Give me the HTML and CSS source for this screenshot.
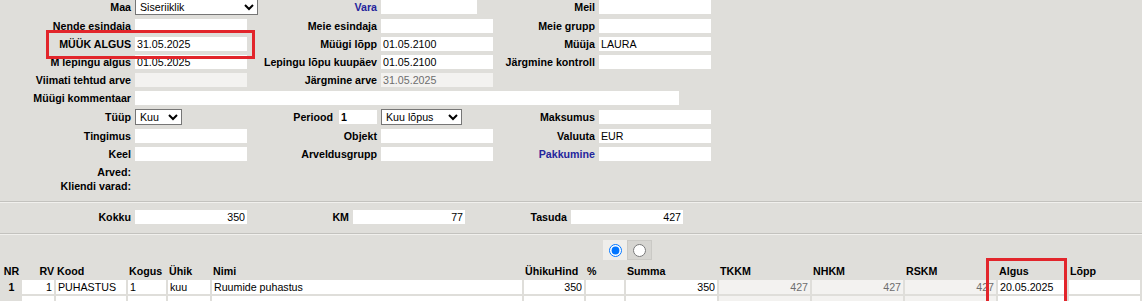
FILE: index.html
```html
<!DOCTYPE html>
<html lang="et">
<head>
    <meta charset="UTF-8">
    <title>Leping</title>
    <link rel="stylesheet" href="styles.css">
</head>
<body>

    <div class="form">
        <label class="lbl">Maa</label>
        <select class="sel sel-maa"><option>Siseriiklik</option></select>
        <a href="#" class="lbl link">Vara</a>
        <input class="fld fld-vara" type="text">
        <label class="lbl">Meil</label>
        <input class="fld" type="text">

        <label class="lbl">Nende esindaja</label>
        <input class="fld" type="text">
        <label class="lbl">Meie esindaja</label>
        <input class="fld" type="text">
        <label class="lbl">Meie grupp</label>
        <input class="fld" type="text">

        <label class="lbl">MÜÜK ALGUS</label>
        <input class="fld" type="text" value="31.05.2025">
        <label class="lbl">Müügi lõpp</label>
        <input class="fld" type="text" value="01.05.2100">
        <label class="lbl">Müüja</label>
        <input class="fld" type="text" value="LAURA">

        <label class="lbl">M lepingu algus</label>
        <input class="fld" type="text" value="01.05.2025">
        <label class="lbl">Lepingu lõpu kuupäev</label>
        <input class="fld" type="text" value="01.05.2100">
        <label class="lbl">Järgmine kontroll</label>
        <input class="fld" type="text">

        <label class="lbl">Viimati tehtud arve</label>
        <input class="fld" type="text" disabled>
        <label class="lbl">Järgmine arve</label>
        <input class="fld" type="text" value="31.05.2025" disabled>
        <span></span>
        <span></span>

        <label class="lbl">Müügi kommentaar</label>
        <input class="fld fld-wide" type="text">

        <label class="lbl">Tüüp</label>
        <select class="sel sel-kuu"><option>Kuu</option></select>
        <div class="lbl lbl-inline">
            <span>Periood</span>
            <input class="fld fld-short" type="text" value="1">
        </div>
        <select class="sel sel-lopus"><option>Kuu lõpus</option></select>
        <label class="lbl">Maksumus</label>
        <input class="fld" type="text">

        <label class="lbl">Tingimus</label>
        <input class="fld" type="text">
        <label class="lbl">Objekt</label>
        <input class="fld" type="text">
        <label class="lbl">Valuuta</label>
        <input class="fld" type="text" value="EUR">

        <label class="lbl">Keel</label>
        <input class="fld" type="text">
        <label class="lbl">Arveldusgrupp</label>
        <input class="fld" type="text">
        <a href="#" class="lbl link">Pakkumine</a>
        <input class="fld" type="text">

        <div class="mark mark-muuk"></div>
    </div>

    <div class="extra">
        <div class="lbl">Arved:</div>
        <div class="lbl">Kliendi varad:</div>
    </div>

    <div class="totals">
        <label class="lbl">Kokku</label>
        <input class="fld num" type="text" value="350">
        <label class="lbl">KM</label>
        <input class="fld num" type="text" value="77">
        <label class="lbl">Tasuda</label>
        <input class="fld num" type="text" value="427">
    </div>

    <div class="tabs">
        <label class="tab tab-on"><input type="radio" name="vaade" checked></label>
        <label class="tab"><input type="radio" name="vaade"></label>
    </div>

    <div class="rows">
        <div class="grid">
            <b class="th center">NR</b>
            <b class="th right">RV</b>
            <b class="th">Kood</b>
            <b class="th">Kogus</b>
            <b class="th">Ühik</b>
            <b class="th">Nimi</b>
            <b class="th">ÜhikuHind</b>
            <b class="th">%</b>
            <b class="th">Summa</b>
            <b class="th">TKKM</b>
            <b class="th">NHKM</b>
            <b class="th">RSKM</b>
            <b class="th">Algus</b>
            <b class="th">Lõpp</b>

            <span class="nr">1</span>
            <input class="cell num" type="text" value="1">
            <input class="cell" type="text" value="PUHASTUS">
            <input class="cell" type="text" value="1">
            <input class="cell" type="text" value="kuu">
            <input class="cell" type="text" value="Ruumide puhastus">
            <input class="cell num" type="text" value="350">
            <input class="cell" type="text">
            <input class="cell num" type="text" value="350">
            <input class="cell num" type="text" value="427" disabled>
            <input class="cell num" type="text" value="427" disabled>
            <input class="cell num" type="text" value="427" disabled>
            <input class="cell cell-date" type="text" value="20.05.2025">
            <input class="cell" type="text">

            <span class="nr"></span>
            <input class="cell num" type="text">
            <input class="cell" type="text">
            <input class="cell" type="text">
            <input class="cell" type="text">
            <input class="cell" type="text">
            <input class="cell num" type="text">
            <input class="cell" type="text">
            <input class="cell num" type="text">
            <input class="cell num" type="text" disabled>
            <input class="cell num" type="text" disabled>
            <input class="cell num" type="text" disabled>
            <input class="cell cell-date" type="text">
            <input class="cell" type="text">
        </div>
        <div class="mark mark-algus"></div>
    </div>

</body>
</html>
```

FILE: styles.css
```css
body {
    margin: 0;
    width: 1142px;
    height: 301px;
    overflow: hidden;
    background-color: #dfdeda;
    font-family: "Liberation Sans", Arial, sans-serif;
    font-size: 8pt;
    color: #000;
}

.form {
    position: relative;
    display: grid;
    grid-template-columns: 131px 112px 126px 112px 98px 112px;
    grid-template-rows: 16px repeat(5, 14px) 16px 14px 14px;
    column-gap: 4px;
    row-gap: 4px;
    margin-top: -1px;
}

.lbl {
    font-weight: bold;
    text-align: right;
    line-height: 14px;
    white-space: nowrap;
    align-self: center;
}

.link {
    color: #25259c;
    text-decoration: none;
}

.lbl-inline {
    display: flex;
    justify-content: flex-end;
    align-items: center;
    gap: 6px;
}

.fld {
    box-sizing: border-box;
    width: 112px;
    height: 14px;
    padding: 0 2px;
    border: none;
    outline: none;
    background-color: #fff;
    font: inherit;
    color: #000;
    align-self: center;
}

.fld:disabled,
.cell:disabled {
    background-color: #f3f2f0;
    color: #6d6d6d;
}

.fld-vara {
    width: 96px;
}

.fld-wide {
    grid-column: 2 / 7;
    width: 544px;
}

.fld-short {
    width: 38px;
}

.num {
    text-align: right;
}

.sel {
    box-sizing: border-box;
    height: 16px;
    padding: 0;
    border: 1px solid #767676;
    border-radius: 0;
    background-color: #fff;
    font: inherit;
    color: #000;
    align-self: center;
}

.sel-maa {
    width: 123px;
}

.sel-kuu {
    width: 47px;
}

.sel-lopus {
    width: 81px;
}

.mark {
    position: absolute;
    box-sizing: border-box;
    border: 3px solid #e2252b;
    pointer-events: none;
}

.mark-muuk {
    left: 46px;
    top: 31px;
    width: 209px;
    height: 29px;
}

.extra {
    margin-top: 4px;
    width: 131px;
}

.totals {
    display: grid;
    grid-template-columns: 131px 112px 98px 112px 98px 112px;
    column-gap: 4px;
    height: 14px;
    margin-top: 8px;
    padding: 8px 0 9px;
    border-top: 1px solid #c3c2be;
    border-bottom: 1px solid #c3c2be;
    box-shadow: inset 0 1px 0 #f1f0ed, 0 1px 0 #f1f0ed;
}

.tabs {
    display: flex;
    margin: 6px 0 0 603px;
    height: 20px;
}

.tab {
    box-sizing: border-box;
    display: flex;
    align-items: center;
    justify-content: center;
    width: 24px;
    height: 20px;
    background-color: #efeeeb;
}

.tab + .tab {
    width: 25px;
    background-color: #d6d5d1;
    border: 1px solid #cac9c5;
}

.tab input {
    margin: 0;
    width: 13px;
    height: 13px;
}

.rows {
    position: relative;
    margin-top: 4px;
}

.grid {
    display: grid;
    grid-template-columns: 17px 32px 70px 38px 42px 310px 60px 38px 91px 91px 91px 91px 69px 71px;
    grid-auto-rows: 14px;
    column-gap: 2px;
    row-gap: 2px;
    padding-left: 3px;
}

.th {
    line-height: 14px;
    padding-left: 1px;
    white-space: nowrap;
}

.th.right {
    text-align: right;
    padding-left: 0;
}

.th.center,
.nr {
    text-align: center;
    padding-left: 0;
}

.nr {
    line-height: 14px;
    font-weight: bold;
}

.cell {
    box-sizing: border-box;
    width: 100%;
    height: 14px;
    padding: 0 2px;
    border: none;
    outline: none;
    background-color: #fff;
    font: inherit;
    color: #000;
}

.cell-date {
    width: 66px;
}

.mark-algus {
    left: 986px;
    top: -6px;
    width: 81px;
    height: 46px;
}
```
